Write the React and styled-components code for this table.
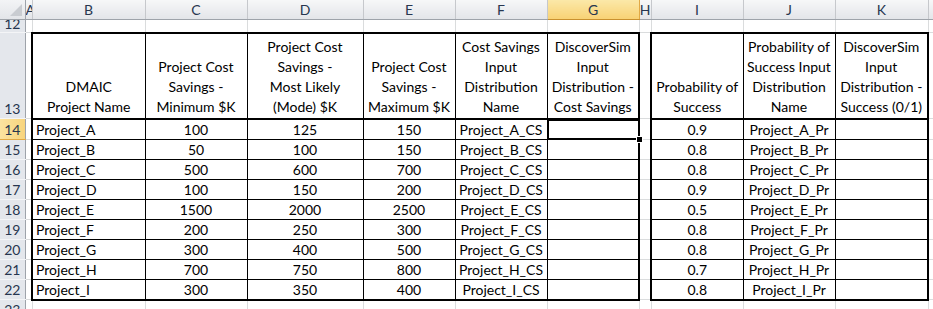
import React from 'react';
import styled, { createGlobalStyle, css } from 'styled-components';

const GlobalStyle = createGlobalStyle`
  html, body {
    margin: 0;
    padding: 0;
    background: #ffffff;
    overflow: hidden;
  }
  body {
    font-family: Lato, "Liberation Sans", sans-serif;
  }
`;

const columns = [
  { key: 'A', width: 7 },
  { key: 'B', width: 113 },
  { key: 'C', width: 102 },
  { key: 'D', width: 116 },
  { key: 'E', width: 92 },
  { key: 'F', width: 92 },
  { key: 'G', width: 92, selected: true },
  { key: 'H', width: 12 },
  { key: 'I', width: 92 },
  { key: 'J', width: 92 },
  { key: 'K', width: 93 },
  { key: 'L', width: 64 },
];

const rows = [
  ['Project_A', 100, 125, 150, 0.9],
  ['Project_B', 50, 100, 150, 0.8],
  ['Project_C', 500, 600, 700, 0.8],
  ['Project_D', 100, 150, 200, 0.9],
  ['Project_E', 1500, 2000, 2500, 0.5],
  ['Project_F', 200, 250, 300, 0.8],
  ['Project_G', 300, 400, 500, 0.8],
  ['Project_H', 700, 750, 800, 0.7],
  ['Project_I', 300, 350, 400, 0.8],
];

const Sheet = styled.table`
  border-collapse: collapse;
  table-layout: fixed;
  width: ${(p) => p.$width}px;
  font-size: 14px;
  color: #000;
`;

const ColHead = styled.th`
  height: 19px;
  padding: 0;
  font-weight: normal;
  font-size: 14px;
  color: #27364f;
  text-align: center;
  white-space: nowrap;
  overflow: hidden;
  border-right: 1px solid #c6c8cc;
  border-bottom: 1px solid #9ea3aa;
  background: linear-gradient(#f6f7f8, #e3e5e9);
  ${(p) =>
    p.$selected &&
    css`
      background: linear-gradient(#fbe8a8, #f8d275);
      border-right: 1px solid #e2a944;
      border-bottom: 1px solid #c9912f;
    `}
`;

const Corner = styled.th`
  position: relative;
  padding: 0;
  border-right: 1px solid #9ea3aa;
  border-bottom: 1px solid #9ea3aa;
  background: linear-gradient(#f3f4f6, #e3e5e9);
  &::after {
    content: '';
    position: absolute;
    right: 3px;
    bottom: 3px;
    border-style: solid;
    border-width: 0 0 12px 12px;
    border-color: transparent transparent #c9ccd1 transparent;
  }
`;

const RowHead = styled.th`
  padding: 0;
  font-weight: normal;
  font-size: 14px;
  color: #27364f;
  text-align: center;
  vertical-align: bottom;
  line-height: 19px;
  background: #e4e7ec;
  border-right: 1px solid #9ea3aa;
  border-bottom: 1px solid #f4f5f7;
  ${(p) =>
    p.$selected &&
    css`
      background: linear-gradient(90deg, #fbe3a0, #f8d47c);
      border-bottom: 1px solid #e2a944;
      border-top: 1px solid #e2a944;
    `}
`;

const Row = styled.tr`
  height: ${(p) => p.$h}px;
`;

const Clip = styled.div`
  height: ${(p) => p.$h}px;
  overflow: hidden;
  display: flex;
  align-items: flex-end;
  justify-content: center;
  line-height: 17px;
`;

const Blank = styled.td`
  padding: 0;
  border-right: 1px solid #dadcdd;
  border-bottom: 1px solid #dadcdd;
`;

const TitleCell = styled.td`
  padding: 0 2px 1px;
  text-align: center;
  vertical-align: bottom;
  line-height: 20px;
  border: 1px solid #000;
  border-top: 2px solid #000;
  border-bottom: 2px solid #000;
  ${(p) => p.$first && css`border-left: 2px solid #000;`}
  ${(p) => p.$last && css`border-right: 2px solid #000;`}
`;

const DataCell = styled.td`
  position: relative;
  padding: 0 3px;
  height: 19px;
  line-height: 19px;
  white-space: nowrap;
  text-align: ${(p) => (p.$left ? 'left' : 'center')};
  border: 1px solid #000;
  ${(p) => p.$first && css`border-left: 2px solid #000;`}
  ${(p) => p.$last && css`border-right: 2px solid #000;`}
  ${(p) => p.$bottom && css`border-bottom: 2px solid #000;`}
`;

const Selection = styled.div`
  position: absolute;
  left: -1px;
  top: -1px;
  right: -2px;
  bottom: -1px;
  border: 2px solid #000;
  &::after {
    content: '';
    position: absolute;
    right: -5px;
    bottom: -5px;
    width: 5px;
    height: 5px;
    background: #000;
    border: 1px solid #fff;
  }
`;

const leftHeaders = [
  'DMAIC<br/>Project Name',
  'Project Cost<br/>Savings -<br/>Minimum $K',
  'Project Cost<br/>Savings -<br/>Most Likely<br/>(Mode) $K',
  'Project Cost<br/>Savings -<br/>Maximum $K',
  'Cost Savings<br/>Input<br/>Distribution<br/>Name',
  'DiscoverSim<br/>Input<br/>Distribution -<br/>Cost Savings',
];

const rightHeaders = [
  'Probability of<br/>Success',
  'Probability of<br/>Success Input<br/>Distribution<br/>Name',
  'DiscoverSim<br/>Input<br/>Distribution -<br/>Success (0/1)',
];

const Lines = ({ text }) =>
  text.split('<br/>').map((line, i, arr) => (
    <React.Fragment key={i}>
      {line}
      {i < arr.length - 1 && <br />}
    </React.Fragment>
  ));

const App = () => {
  const total = 25 + columns.reduce((s, c) => s + c.width, 0);
  return (
    <>
      <GlobalStyle />
      <Sheet $width={total}>
        <colgroup>
          <col style={{ width: 25 }} />
          {columns.map((c) => (
            <col key={c.key} style={{ width: c.width }} />
          ))}
        </colgroup>
        <thead>
          <tr>
            <Corner />
            {columns.map((c) => (
              <ColHead key={c.key} $selected={c.selected}>
                {c.key}
              </ColHead>
            ))}
          </tr>
        </thead>
        <tbody>
          <Row $h={13}>
            <RowHead>
              <Clip $h={12}>12</Clip>
            </RowHead>
            {columns.map((c) => (
              <Blank key={c.key} />
            ))}
          </Row>
          <Row $h={86}>
            <RowHead>13</RowHead>
            <Blank />
            {leftHeaders.map((h, i) => (
              <TitleCell key={h} $first={i === 0} $last={i === leftHeaders.length - 1}>
                <Lines text={h} />
              </TitleCell>
            ))}
            <Blank />
            {rightHeaders.map((h, i) => (
              <TitleCell key={h} $first={i === 0} $last={i === rightHeaders.length - 1}>
                <Lines text={h} />
              </TitleCell>
            ))}
            <Blank />
          </Row>
          {rows.map(([name, min, mode, max, prob], r) => {
            const letter = name.slice(-1);
            const bottom = r === rows.length - 1;
            return (
              <Row key={name} $h={20}>
                <RowHead $selected={r === 0}>{14 + r}</RowHead>
                <Blank />
                <DataCell $left $first $bottom={bottom}>
                  {name}
                </DataCell>
                <DataCell $bottom={bottom}>{min}</DataCell>
                <DataCell $bottom={bottom}>{mode}</DataCell>
                <DataCell $bottom={bottom}>{max}</DataCell>
                <DataCell $bottom={bottom}>{`Project_${letter}_CS`}</DataCell>
                <DataCell $last $bottom={bottom}>
                  {r === 0 && <Selection />}
                </DataCell>
                <Blank />
                <DataCell $first $bottom={bottom}>
                  {prob}
                </DataCell>
                <DataCell $bottom={bottom}>{`Project_${letter}_Pr`}</DataCell>
                <DataCell $last $bottom={bottom} />
                <Blank />
              </Row>
            );
          })}
          <Row $h={20}>
            <RowHead>23</RowHead>
            {columns.map((c) => (
              <Blank key={c.key} />
            ))}
          </Row>
        </tbody>
      </Sheet>
    </>
  );
};

export default App;
